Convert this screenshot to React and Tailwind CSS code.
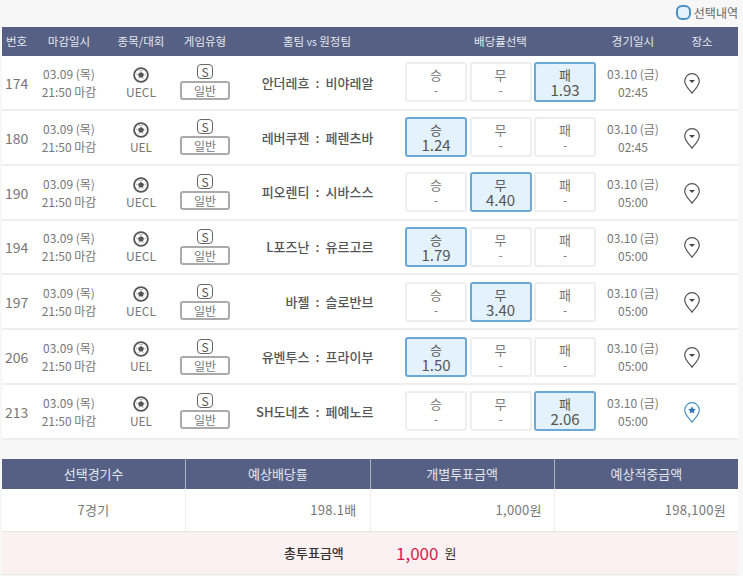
const GAMES = [
  { no: 174, league: 'UECL', home: '안더레흐', away: '비야레알', pick: 2, odd: '1.93', day: '03.10 (금)', time: '02:45' },
  { no: 180, league: 'UEL', home: '레버쿠젠', away: '페렌츠바', pick: 0, odd: '1.24', day: '03.10 (금)', time: '02:45' },
  { no: 190, league: 'UECL', home: '피오렌티', away: '시바스스', pick: 1, odd: '4.40', day: '03.10 (금)', time: '05:00' },
  { no: 194, league: 'UECL', home: 'L포즈난', away: '유르고르', pick: 0, odd: '1.79', day: '03.10 (금)', time: '05:00' },
  { no: 197, league: 'UECL', home: '바젤', away: '슬로반브', pick: 1, odd: '3.40', day: '03.10 (금)', time: '05:00' },
  { no: 206, league: 'UEL', home: '유벤투스', away: '프라이부', pick: 0, odd: '1.50', day: '03.10 (금)', time: '05:00' },
  { no: 213, league: 'UEL', home: 'SH도네츠', away: '페예노르', pick: 2, odd: '2.06', day: '03.10 (금)', time: '05:00', fav: true },
]

const LABELS = ['승', '무', '패']
const COLS = 'grid grid-cols-[34px_66px_78px_50px_170px_201px_64px_54px] pr-[19px]'

function Ball() {
  return (
    <svg width="16" height="16" viewBox="0 0 16 16" fill="none">
      <circle cx="8" cy="8" r="6.9" stroke="#555" strokeWidth="1.8" />
      <path d="M8 4.900l3 2.200-1.100 3.500H6.100L5 7.100z" fill="#555" />
      <path d="M6 3.200L8 4l2-.8M3 7l1.500 1M13 7l-1.500 1M5.500 12l1-1.200M10.500 12l-1-1.200" stroke="#aaa" strokeWidth="1" />
    </svg>
  )
}

function Pin({ fav }) {
  const c = fav ? '#4a90c4' : '#555'
  return (
    <svg width="16" height="21" viewBox="0 0 16 21" fill="none">
      <path d="M8 20.200C5.800 16.800.7 13 .7 8a7.300 7.300 0 0 1 14.600 0C15.300 13 10.200 16.800 8 20.200z" stroke={c} strokeWidth="1.200" />
      {fav
        ? <path d="M8 4.200l1.200 2.500 2.700.3-2 1.900.6 2.700L8 10.300l-2.500 1.300.6-2.700-2-1.900 2.700-.3z" fill="#2f78b5" />
        : <path d="M5 7h6L8 10z" fill="#444" />}
    </svg>
  )
}

function OddButton({ label, odd, active }) {
  return (
    <div className={`w-[62px] h-10 pt-[2px] rounded-[3px] border-2 flex flex-col items-center justify-center ${active ? 'border-[#6aa9d6] bg-[#e3f2fc] text-[#555]' : 'border-[#eeeeee] bg-white text-[#777]'}`}>
      <span className="text-[13px] leading-[14px]">{label}</span>
      <span className={`leading-[16px] ${active ? 'text-[15px]' : 'text-[12px]'}`}>{odd}</span>
    </div>
  )
}

function Row({ g }) {
  return (
    <div className={`${COLS} h-[54.85px] bg-white border-b-2 border-[#eeeeee] items-center text-[#777]`}>
      <div className="text-[14px] pl-[3px] pt-[2px]">{g.no}</div>
      <div className="text-center text-[12px] leading-[18px] pt-[1px]">
        <div>03.09 (목)</div>
        <div>21:50 마감</div>
      </div>
      <div className="flex flex-col items-center text-[12px] leading-[16px] pt-[2px]">
        <Ball />
        <span className="mt-[1px]">{g.league}</span>
      </div>
      <div className="flex flex-col items-center gap-[2px]">
        <div className="w-4 h-[15px] rounded-[4px] border border-[#666] text-[12px] leading-[13px] text-center text-[#555]">S</div>
        <div className="w-[50px] h-[19px] rounded-[3px] border-2 border-[#aaaaaa] text-[12px] leading-[15px] text-center">일반</div>
      </div>
      <div className="flex justify-center text-[13px] font-medium text-[#555] pl-[5px]">
        <span className="w-[70px] text-right whitespace-nowrap">{g.home}</span>
        <span className="w-[16px] text-center">:</span>
        <span className="w-[70px] whitespace-nowrap">{g.away}</span>
      </div>
      <div className="flex gap-[2.5px] pl-[5px]">
        {LABELS.map((l, i) => (
          <OddButton key={l} label={l} odd={g.pick === i ? g.odd : '-'} active={g.pick === i} />
        ))}
      </div>
      <div className="text-center text-[12px] leading-[18px] pt-[1px]">
        <div>{g.day}</div>
        <div>{g.time}</div>
      </div>
      <div className="flex justify-center pt-[2px]">
        <Pin fav={g.fav} />
      </div>
    </div>
  )
}

export default function App() {
  return (
    <div className="w-[743px] h-[576px] overflow-hidden bg-[#f7f7f7] font-['Noto_Sans_CJK_KR','Noto_Sans',sans-serif]">
      <div className="h-[27px] flex items-center justify-end pr-[2px] pb-[2px] gap-[3px]">
        <span className="w-[15px] h-[15px] rounded-[6px] border-2 border-[#4b90c2] bg-[#e3f2fc]" />
        <span className="text-[12px] text-[#666] pr-[3px]">선택내역</span>
      </div>

      <div className="ml-[2px] w-[736px]">
        <div className={`${COLS} h-[29px] bg-[#566084] items-center text-[11.5px] text-[#e4e7ee] text-center`}>
          <div className="pr-[5px]">번호</div>
          <div>마감일시</div>
          <div>종목/대회</div>
          <div>게임유형</div>
          <div className="pl-[4px]">홈팀 <span className="text-[10px]">vs</span> 원정팀</div>
          <div>배당률선택</div>
          <div>경기일시</div>
          <div className="pl-[20px] whitespace-nowrap">장소</div>
        </div>
        {GAMES.map(g => <Row key={g.no} g={g} />)}

        <div className="mt-[19px] grid grid-cols-4 gap-x-[1px] h-[30px] bg-[#aeb2bf] text-[13px] text-[#e4e7ee] text-center">
          {['선택경기수', '예상배당률', '개별투표금액', '예상적중금액'].map(t => (
            <div key={t} className="bg-[#566084] leading-[30px]">{t}</div>
          ))}
        </div>
        <div className="grid grid-cols-4 gap-x-[1px] h-[42px] bg-[#eeeeee] text-[13px] text-[#777] tracking-[0.3px]">
          <div className="bg-white flex items-center justify-center">7경기</div>
          <div className="bg-white flex items-center justify-end pr-[13px]">198.1배</div>
          <div className="bg-white flex items-center justify-end pr-[12px]">1,000원</div>
          <div className="bg-white flex items-center justify-end pr-[12px]">198,100원</div>
        </div>
        <div className="h-[44px] bg-[#fbf0f2] border-y border-[#e6e6e6] flex items-center pl-[282px]">
          <span className="text-[13px] font-medium text-[#333] w-[112px]">총투표금액</span>
          <span className="text-[17px] text-[#d81b4a]">1,000</span>
          <span className="text-[13px] text-[#333] ml-[6px]">원</span>
        </div>
      </div>
    </div>
  )
}
